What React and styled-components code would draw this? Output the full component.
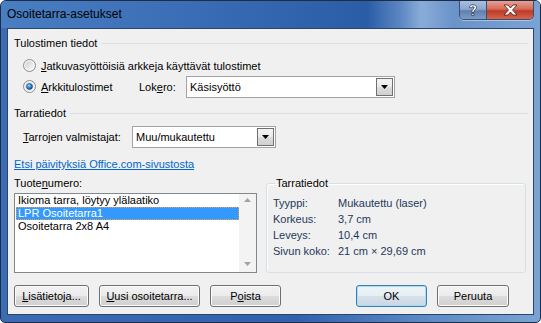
import React from "react";
import styled, { createGlobalStyle, css } from "styled-components";

const Global = createGlobalStyle`
  html, body { margin: 0; padding: 0; background: #ffffff; }
  body { font-family: "Liberation Sans", Arial, sans-serif; }
  * { box-sizing: border-box; }
`;

const Window = styled.div`
  width: 541px;
  height: 323px;
  border: 1px solid #1c2d44;
  border-radius: 6px 6px 5px 5px;
  background: linear-gradient(to right, #3b6bb2 0%, #3063ac 55%, #5f8cc6 80%, #7aa2d4 100%);
  display: flex;
  flex-direction: column;
  overflow: hidden;
  font-size: 11px;
  color: #000;
`;

const TitleBar = styled.div`
  height: 27px;
  display: flex;
  align-items: flex-start;
  padding: 0 6px 0 6px;
  background: linear-gradient(
    to right,
    #4a7ec2 0%,
    #3a6db5 35%,
    #2b5da7 68%,
    #5b86c2 74%,
    #8aacd8 78%,
    #6a93ca 84%,
    #7aa2d4 100%
  );
`;

const Title = styled.div`
  font-size: 12px;
  line-height: 27px;
  color: #000;
  flex: 1;
`;

const CaptionButtons = styled.div`
  display: flex;
  height: 19px;
  border: 1px solid #3b4f6a;
  border-top: none;
  border-radius: 0 0 5px 5px;
  overflow: hidden;
  box-shadow: 0 1px 0 rgba(255, 255, 255, 0.4);
`;

const CaptionButton = styled.div`
  height: 100%;
  width: ${(p) => p.$w}px;
  display: flex;
  align-items: center;
  justify-content: center;
  ${(p) =>
    p.$close
      ? css`
          background: linear-gradient(#e8a093 0%, #d46a57 45%, #c03b26 55%, #d5644c 100%);
        `
      : css`
          background: linear-gradient(#a9c0dd 0%, #8ba8cf 45%, #5f7fae 55%, #7c9cc8 100%);
          border-right: 1px solid #3b4f6a;
        `}
`;

const Frame = styled.div`
  flex: 1;
  padding: 0 6px 7px 6px;
  display: flex;
`;

const Client = styled.div`
  flex: 1;
  border: 1px solid #28456d;
  background: #f0f0f0;
  display: flex;
  flex-direction: column;
  padding: 0 5px 0 6px;
`;

const SectionHeader = styled.div`
  height: 20px;
  margin-top: ${(p) => p.$mt}px;
  display: flex;
  align-items: center;
  gap: 4px;
  &::after {
    content: "";
    flex: 1;
    height: 1px;
    background: #d5dfe5;
  }
`;

const Row = styled.div`
  height: ${(p) => p.$h || 21}px;
  margin-top: ${(p) => p.$mt || 0}px;
  padding-left: ${(p) => p.$pl || 0}px;
  display: flex;
  align-items: center;
`;

const RadioLabel = styled.label`
  display: flex;
  align-items: center;
  gap: 5px;
  width: ${(p) => (p.$w ? `${p.$w}px` : "auto")};
`;

const FieldLabel = styled.span`
  width: ${(p) => p.$w}px;
  flex: none;
`;

const Combo = styled.div`
  width: ${(p) => p.$w}px;
  height: 22px;
  border: 1px solid #a3a3a3;
  background: #fff;
  display: flex;
  align-items: center;
  padding: 1px;
`;

const ComboText = styled.span`
  flex: 1;
  padding-left: 2px;
`;

const ComboButton = styled.div`
  width: 17px;
  height: 100%;
  border: 1px solid #707070;
  background: linear-gradient(#f3f3f3 0%, #ebebeb 50%, #dddddd 50%, #d0d0d0 100%);
  display: flex;
  align-items: center;
  justify-content: center;
`;

const Link = styled.a`
  height: 16px;
  margin-top: 8px;
  line-height: 16px;
  color: #0066cc;
  text-decoration: underline;
  align-self: flex-start;
`;

const Lower = styled.div`
  display: flex;
  gap: 9px;
  margin-top: 3px;
`;

const LeftCol = styled.div`
  width: 243px;
  display: flex;
  flex-direction: column;
`;

const Label = styled.div`
  height: 16px;
  line-height: 16px;
`;

const ListBox = styled.div`
  margin-top: 2px;
  height: 80px;
  border: 1px solid #828790;
  background: #fff;
  display: flex;
`;

const ListItems = styled.div`
  flex: 1;
  padding: 0 0 0 1px;
  display: flex;
  flex-direction: column;
`;

const ListItem = styled.div`
  height: 13px;
  line-height: 13px;
  padding-left: 2px;
  ${(p) =>
    p.$selected &&
    css`
      background: #3399ff;
      color: #fff;
      outline: 1px dotted #e6a040;
      outline-offset: -1px;
    `}
`;

const ScrollBar = styled.div`
  width: 17px;
  background: #f3f3f3;
  display: flex;
  flex-direction: column;
  justify-content: space-between;
  align-items: center;
  padding: 4px 0 6px;
`;

const Group = styled.fieldset`
  width: 260px;
  height: 98px;
  margin: 0;
  padding: 4px 0 0 6px;
  border: 1px solid #d5dfe5;
  border-radius: 3px;
  box-shadow: inset 1px 1px 0 #fff;
`;

const Legend = styled.legend`
  padding: 0 1px;
  margin-left: 2px;
  line-height: 16px;
  height: 16px;
`;

const InfoGrid = styled.div`
  display: grid;
  grid-template-columns: 65px 1fr;
  grid-auto-rows: 16px;
  align-items: center;
  color: #1e395b;
`;

const ButtonRow = styled.div`
  margin-top: 12px;
  display: flex;
  justify-content: space-between;
  padding-right: 19px;
`;

const ButtonGroup = styled.div`
  display: flex;
  gap: 10px;
`;

const Button = styled.button`
  font: inherit;
  font-size: 11px;
  color: #000;
  width: ${(p) => p.$w}px;
  height: 22px;
  border-radius: 3px;
  padding: 0;
  border: 1px solid ${(p) => (p.$default ? "#3c7fb1" : "#707070")};
  background: ${(p) =>
    p.$default
      ? "linear-gradient(#eef4f8 0%, #e6eef4 50%, #d6e1ea 50%, #c9d7e3 100%)"
      : "linear-gradient(#f2f2f2 0%, #ebebeb 50%, #dddddd 50%, #cfcfcf 100%)"};
  box-shadow: inset 0 0 0 1px ${(p) => (p.$default ? "#a6dcf7" : "#fbfbfb")};
`;

const U = styled.u`
  text-decoration: underline;
`;

function Radio({ checked }) {
  return (
    <svg width="13" height="13" viewBox="0 0 13 13">
      <defs>
        <linearGradient id={`rb${checked ? 1 : 0}`} x1="0" y1="0" x2="1" y2="1">
          <stop offset="0" stopColor="#cfcfcf" />
          <stop offset="1" stopColor="#fbfbfb" />
        </linearGradient>
        <radialGradient id="dot" cx="0.4" cy="0.35" r="0.7">
          <stop offset="0" stopColor="#9fe0fb" />
          <stop offset="0.5" stopColor="#2b8ad4" />
          <stop offset="1" stopColor="#0b3e78" />
        </radialGradient>
      </defs>
      <circle cx="6.5" cy="6.5" r="6" fill="#f4f4f4" stroke="#8c8c8c" />
      <circle cx="6.5" cy="6.5" r="4.3" fill={`url(#rb${checked ? 1 : 0})`} />
      {checked && <circle cx="6.5" cy="6.5" r="3" fill="url(#dot)" stroke="#1b4f8a" strokeWidth="0.6" />}
    </svg>
  );
}

function DownArrow() {
  return (
    <svg width="7" height="4" viewBox="0 0 7 4">
      <path d="M0 0H7L3.5 4Z" fill="#000" />
    </svg>
  );
}

function ScrollArrow({ up }) {
  return (
    <svg width="7" height="4" viewBox="0 0 7 4">
      <path d={up ? "M0 4H7L3.5 0Z" : "M0 0H7L3.5 4Z"} fill="#a3a3a3" />
    </svg>
  );
}

function HelpGlyph() {
  return (
    <svg width="10" height="13" viewBox="0 0 10 13">
      <path
        d="M1.5 3.5C1.5 1.8 3 0.8 5 0.8C7.2 0.8 8.5 2 8.5 3.6C8.5 5.6 6 5.8 6 7.8V8.3H3.8V7.5C3.8 5.2 6.2 4.9 6.2 3.8C6.2 3.1 5.7 2.7 5 2.7C4.2 2.7 3.7 3.2 3.7 3.9Z M3.8 9.4H6V11.6H3.8Z"
        fill="#fff"
        stroke="#2a3a55"
        strokeWidth="0.8"
      />
    </svg>
  );
}

function CloseGlyph() {
  return (
    <svg width="15" height="12" viewBox="0 0 15 12">
      <path
        d="M1 1H5L7.5 4L10 1H14L9.5 6L14 11H10L7.5 8L5 11H1L5.5 6Z"
        fill="#fff"
        stroke="#4a1a14"
        strokeWidth="0.8"
        strokeLinejoin="round"
      />
    </svg>
  );
}

export default function App() {
  return (
    <>
      <Global />
      <Window>
        <TitleBar>
          <Title>Osoitetarra-asetukset</Title>
          <CaptionButtons>
            <CaptionButton $w={27}>
              <HelpGlyph />
            </CaptionButton>
            <CaptionButton $w={46} $close>
              <CloseGlyph />
            </CaptionButton>
          </CaptionButtons>
        </TitleBar>
        <Frame>
          <Client>
            <SectionHeader $mt={4}>Tulostimen tiedot</SectionHeader>
            <Row $mt={2} $pl={9}>
              <RadioLabel>
                <Radio />
                <span>
                  <U>J</U>atkuvasyöttöisiä arkkeja käyttävät tulostimet
                </span>
              </RadioLabel>
            </Row>
            <Row $pl={9}>
              <RadioLabel $w={116}>
                <Radio checked />
                <span>
                  <U>A</U>rkkitulostimet
                </span>
              </RadioLabel>
              <FieldLabel $w={47}>
                Lok<U>e</U>ro:
              </FieldLabel>
              <Combo $w={209}>
                <ComboText>Käsisyöttö</ComboText>
                <ComboButton>
                  <DownArrow />
                </ComboButton>
              </Combo>
            </Row>
            <SectionHeader $mt={6}>Tarratiedot</SectionHeader>
            <Row $h={22} $mt={3} $pl={9}>
              <FieldLabel $w={109}>
                <U>T</U>arrojen valmistajat:
              </FieldLabel>
              <Combo $w={144}>
                <ComboText>Muu/mukautettu</ComboText>
                <ComboButton>
                  <DownArrow />
                </ComboButton>
              </Combo>
            </Row>
            <Link href="#">Etsi päivityksiä Office.com-sivustosta</Link>
            <Lower>
              <LeftCol>
                <Label>
                  Tuote<U>n</U>umero:
                </Label>
                <ListBox>
                  <ListItems>
                    <ListItem>Ikioma tarra, löytyy ylälaatiko</ListItem>
                    <ListItem $selected>LPR Osoitetarra1</ListItem>
                    <ListItem>Osoitetarra 2x8 A4</ListItem>
                  </ListItems>
                  <ScrollBar>
                    <ScrollArrow up />
                    <ScrollArrow />
                  </ScrollBar>
                </ListBox>
              </LeftCol>
              <Group>
                <Legend>Tarratiedot</Legend>
                <InfoGrid>
                  <span>Tyyppi:</span>
                  <span>Mukautettu (laser)</span>
                  <span>Korkeus:</span>
                  <span>3,7 cm</span>
                  <span>Leveys:</span>
                  <span>10,4 cm</span>
                  <span>Sivun koko:</span>
                  <span>21 cm × 29,69 cm</span>
                </InfoGrid>
              </Group>
            </Lower>
            <ButtonRow>
              <ButtonGroup>
                <Button $w={75}>
                  <U>L</U>isätietoja...
                </Button>
                <Button $w={101}>
                  <U>U</U>usi osoitetarra...
                </Button>
                <Button $w={71}>
                  P<U>o</U>ista
                </Button>
              </ButtonGroup>
              <ButtonGroup>
                <Button $w={71} $default>
                  OK
                </Button>
                <Button $w={72}>Peruuta</Button>
              </ButtonGroup>
            </ButtonRow>
          </Client>
        </Frame>
      </Window>
    </>
  );
}
